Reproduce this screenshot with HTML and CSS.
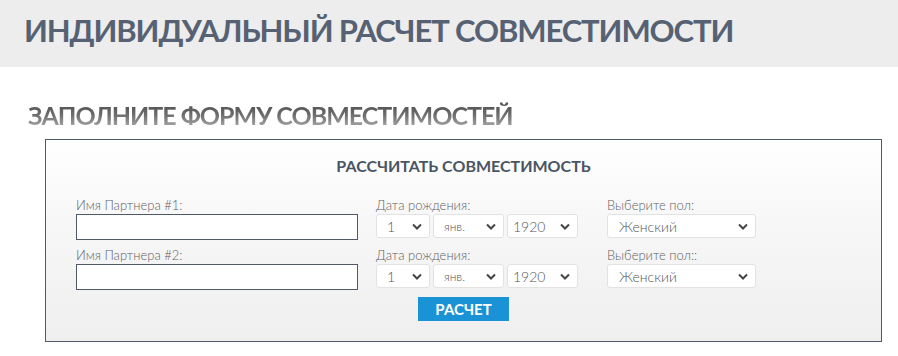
FILE: index.html
```html
<!DOCTYPE html>
<html lang="ru">
<head>
    <meta charset="UTF-8">
    <title>Индивидуальный расчет совместимости</title>
    <link rel="stylesheet" href="styles.css">
</head>
<body>
    <div class="page-head">
        <h1>ИНДИВИДУАЛЬНЫЙ РАСЧЕТ СОВМЕСТИМОСТИ</h1>
    </div>

    <h2 class="sub-title">ЗАПОЛНИТЕ ФОРМУ СОВМЕСТИМОСТЕЙ</h2>

    <form class="form-box">
        <div class="form-title">РАССЧИТАТЬ СОВМЕСТИМОСТЬ</div>

        <div class="form-row">
            <div class="field">
                <label>Имя Партнера #1:</label>
                <input type="text" class="name-input">
            </div>
            <div class="field">
                <label>Дата рождения:</label>
                <div class="date-group">
                    <select class="sel sel-day"><option>1</option></select>
                    <select class="sel sel-month"><option>янв.</option></select>
                    <select class="sel sel-year"><option>1920</option></select>
                </div>
            </div>
            <div class="field">
                <label>Выберите пол:</label>
                <select class="sel sel-gender"><option>Женский</option></select>
            </div>
        </div>

        <div class="form-row">
            <div class="field">
                <label>Имя Партнера #2:</label>
                <input type="text" class="name-input">
            </div>
            <div class="field">
                <label>Дата рождения:</label>
                <div class="date-group">
                    <select class="sel sel-day"><option>1</option></select>
                    <select class="sel sel-month"><option>янв.</option></select>
                    <select class="sel sel-year"><option>1920</option></select>
                </div>
            </div>
            <div class="field">
                <label>Выберите пол::</label>
                <select class="sel sel-gender"><option>Женский</option></select>
            </div>
        </div>

        <div class="form-row">
            <div></div>
            <div><button type="button" class="calc-btn">РАСЧЕТ</button></div>
        </div>
    </form>
</body>
</html>
```

FILE: styles.css
```css
body {
    margin: 0;
    padding: 0;
    background: #fff;
    font-family: Lato, "Open Sans", sans-serif;
    color: #666;
}

.page-head {
    background: #ededed;
    height: 67px;
    padding-left: 24px;
    box-sizing: border-box;
}

.page-head h1 {
    margin: 0;
    font-size: 31px;
    font-weight: 700;
    line-height: 60px;
    color: #566273;
    letter-spacing: -1.1px;
}

.sub-title {
    margin: 30px 0 0 28px;
    display: inline-block;
    font-size: 25px;
    font-weight: 700;
    line-height: 36px;
    letter-spacing: -1px;
    background: linear-gradient(#3c3c3c 0%, #6e6e6e 50%, #c4c4c4 100%);
    -webkit-background-clip: text;
    background-clip: text;
    color: transparent;
}

.form-box {
    display: block;
    margin: 6px 0 0 45px;
    width: 837px;
    height: 203px;
    box-sizing: border-box;
    border: 1px solid #4f5a66;
    padding: 16px 0 0 30px;
    background: linear-gradient(#fff 0%, #f7f7f7 40%, #efefef 100%);
}

.form-title {
    text-align: center;
    font-size: 16px;
    font-weight: 700;
    line-height: 20px;
    color: #4a5563;
    margin: 0 30px 21px 0;
}

.form-row {
    display: grid;
    grid-template-columns: 300px 231px 150px;
    margin-bottom: 7px;
}

.field {
    display: flex;
    flex-direction: column;
}

.field label {
    font-size: 13px;
    font-weight: 300;
    line-height: 16px;
    color: #5f5f66;
    margin-bottom: 1px;
}

.name-input {
    width: 282px;
    height: 26px;
    box-sizing: border-box;
    border: 1px solid #4f5a66;
    background: #fff;
    margin: 0;
    padding: 2px 4px;
}

.date-group {
    display: flex;
    gap: 3px;
}

.sel {
    height: 24px;
    box-sizing: border-box;
    border: 1px solid #e2e2e2;
    border-radius: 3px;
    background: #fff url("data:image/svg+xml,%3Csvg xmlns='http://www.w3.org/2000/svg' width='10' height='7' viewBox='0 0 10 7'%3E%3Cpath d='M1 1.5l4 4 4-4' fill='none' stroke='%23444' stroke-width='2'/%3E%3C/svg%3E") no-repeat right 7px center;
    -webkit-appearance: none;
    appearance: none;
    font-family: Lato, "Open Sans", sans-serif;
    font-size: 14px;
    font-weight: 300;
    color: #555;
    padding: 0 0 0 10px;
    margin: 0;
}

.sel-day { width: 54px; }
.sel-month { width: 71px; font-size: 12px; }
.sel-year { width: 71px; padding-left: 5px; }
.sel-gender { width: 149px; padding-left: 11px; }

.calc-btn {
    margin-left: 42px;
    width: 91px;
    height: 24px;
    border: none;
    background: #1993d6;
    color: #fff;
    font-family: Lato, "Open Sans", sans-serif;
    font-size: 15px;
    font-weight: 700;
    padding: 0;
}
```
